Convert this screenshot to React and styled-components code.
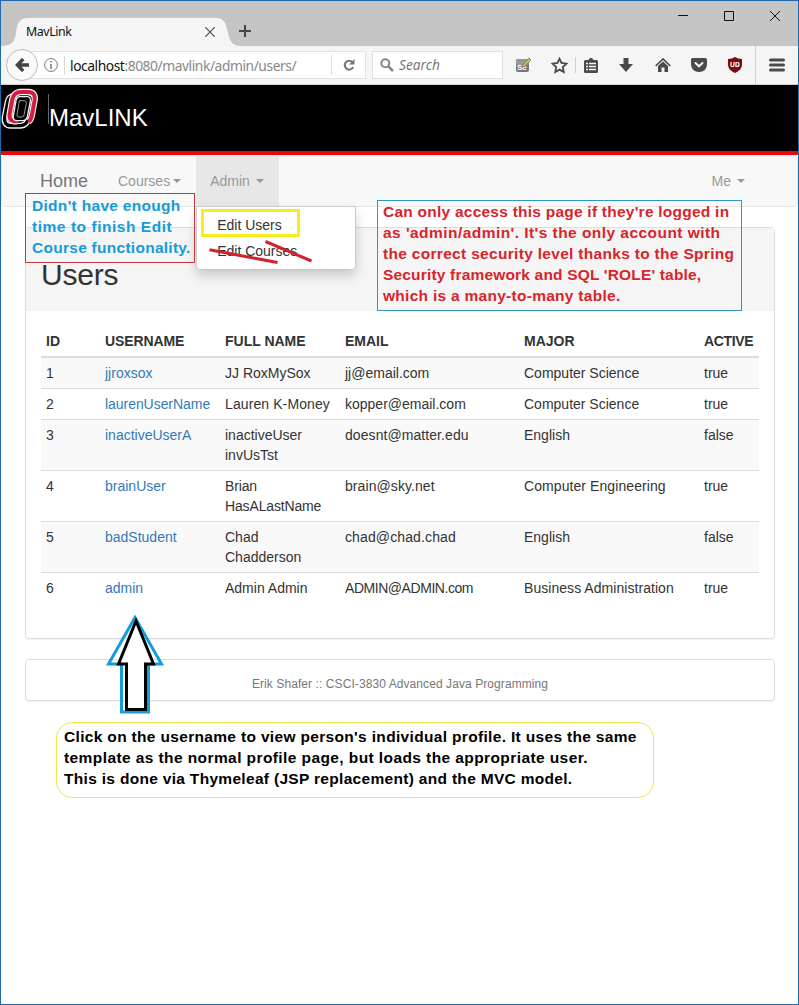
import React from 'react';
import styled, { createGlobalStyle, css } from 'styled-components';

const Global = createGlobalStyle`
  *, *::before, *::after { box-sizing: border-box; }
  body { margin: 0; background: #fff; }
  #root { font-family: "Liberation Sans", Arial, sans-serif; font-size: 14px; line-height: 20px; color: #333; }
`;

const Window = styled.div`
  position: relative;
  width: 799px;
  height: 1005px;
  border: 1px solid #1f6ba9;
  background: #fff;
  overflow: hidden;
`;

const TitleBar = styled.div`
  display: flex;
  height: 45px;
  background: #c5c5c5;
`;
const Tab = styled.div`
  position: relative;
  display: flex;
  align-items: center;
  justify-content: space-between;
  width: 237px;
  height: 28px;
  margin-top: 17px;
  padding: 0 23px 0 25px;
  font: 12.4px/16px "Noto Sans", sans-serif;
  letter-spacing: -0.45px;
  color: #111;
`;
const TabShape = styled.svg`
  position: absolute;
  left: 0;
  top: 0;
`;
const TabLabel = styled.span`
  position: relative;
`;
const Glyph = styled.svg`
  position: relative;
  display: block;
  flex: none;
`;
const NewTab = styled.div`
  padding: 24px 0 0 1px;
`;
const WindowButtons = styled.div`
  display: flex;
  gap: 34px;
  margin-left: auto;
  padding: 9px 17px 0 0;
`;

const Toolbar = styled.div`
  display: flex;
  align-items: center;
  height: 39px;
  padding-left: 5px;
  background: #f5f5f5;
  border-bottom: 1px solid #cfd1cf;
  font-family: "Noto Sans", sans-serif;
  & > * { flex: none; }
`;
const BackButton = styled.div`
  position: relative;
  z-index: 1;
  display: grid;
  place-items: center;
  width: 32px;
  height: 32px;
  border: 1px solid #bdbdbd;
  border-radius: 50%;
  background: #fafafa;
`;
const AddressBar = styled.div`
  display: flex;
  align-items: center;
  width: 343px;
  height: 28px;
  margin-left: -15px;
  padding-left: 20px;
  background: #fff;
  border: 1px solid #e3e3e3;
`;
const Url = styled.span`
  flex: 1;
  margin-left: 6px;
  padding-left: 5px;
  border-left: 1px solid #d8d8d8;
  font-size: 13.8px;
  line-height: 19px;
  letter-spacing: -0.43px;
  color: #888;
  white-space: nowrap;
  b { font-weight: 400; color: #111; }
`;
const Reload = styled.div`
  display: grid;
  place-items: center;
  width: 34px;
  height: 20px;
  border-left: 1px solid #ddd;
`;
const SearchBox = styled.div`
  display: flex;
  align-items: center;
  gap: 5px;
  width: 131px;
  height: 28px;
  margin-left: 6px;
  padding-left: 7px;
  background: #fff;
  border: 1px solid #e0e0e0;
  font-size: 13.7px;
  font-style: italic;
  color: #777;
`;
const Tools = styled.div`
  display: flex;
  align-items: center;
  height: 38px;
`;
const Tool = styled.div`
  display: grid;
  place-items: center;
  width: ${(p) => p.$w}px;
  height: ${(p) => p.$h || 38}px;
  margin-left: ${(p) => p.$ml || 0}px;
  border-left: ${(p) => (p.$line ? '1px solid #cfcfcf' : '0')};
`;

const Brand = styled.header`
  display: flex;
  height: 70px;
  background: #000;
  border-bottom: 4px solid #e60a0a;
  color: #fff;
`;
const BrandName = styled.div`
  height: 30px;
  margin: 9px 0 0 10px;
  padding-top: 10px;
  border-left: 1px solid #666;
  font-size: 24px;
  line-height: 28px;
`;

const Navbar = styled.nav`
  display: flex;
  height: 52px;
  padding-left: 38px;
  background: #f8f8f8;
  border: 1px solid #e7e7e7;
  border-radius: 4px;
  color: #999;
`;
const NavHome = styled.a`
  width: 78px;
  padding-top: 15px;
  font-size: 18px;
  color: #777;
`;
const NavItem = styled.a`
  position: relative;
  display: flex;
  align-items: center;
  gap: ${(p) => p.$gap}px;
  height: 50px;
  ${(p) => p.$active && css`
    width: 83px;
    margin-left: 15px;
    padding-left: 14px;
    background: #e7e7e7;
  `}
  ${(p) => p.$end && css`
    margin-left: auto;
    margin-right: 52px;
  `}
`;
const Caret = styled.i`
  border: 4px solid transparent;
  border-top-color: #999;
  border-bottom: 0;
`;
const Menu = styled.div`
  position: absolute;
  z-index: 2;
  left: 0;
  top: 50px;
  width: 160px;
  padding: 5px 0;
  background: #fff;
  border: 1px solid #ccc;
  border-radius: 0 0 4px 4px;
  box-shadow: 0 6px 12px rgba(0, 0, 0, 0.175);
  color: #333;
`;
const MenuItem = styled.div`
  padding: 3px 20px;
`;

const Content = styled.main`
  padding: 20px 23px 0 24px;
`;
const Panel = styled.section`
  margin-bottom: 20px;
  background: #fff;
  border: 1px solid #ddd;
  border-radius: 4px;
  box-shadow: 0 1px 1px rgba(0, 0, 0, 0.05);
`;
const PanelHeading = styled.div`
  padding: 10px 15px;
  background: #f5f5f5;
`;
const Title = styled.h2`
  margin: 20px 0 10px;
  font-size: 30px;
  font-weight: 400;
  line-height: 33px;
  letter-spacing: -0.2px;
`;
const Table = styled.table`
  display: block;
  margin: 15px 15px 34px;
  thead, tbody { display: block; }
`;
const Row = styled.tr`
  display: grid;
  grid-template-columns: 59px 120px 120px 179px 180px 60px;
  border-bottom: ${(p) => (p.$head ? '2px' : '1px')} solid #ddd;
  background: ${(p) => (p.$striped ? '#f9f9f9' : '#fff')};
  &:last-child { border-bottom-color: ${(p) => (p.$head ? '#ddd' : 'transparent')}; }
`;
const Cell = styled.td`
  min-width: 0;
  padding: 5px;
  text-align: left;
  letter-spacing: ${(p) => p.$ls || 0}px;
`;
const UserLink = styled.a`
  color: #337ab7;
`;
const FooterPanel = styled(Panel)`
  height: 42px;
  padding-top: 14px;
  font-size: 12px;
  letter-spacing: 0.08px;
  text-align: center;
  color: #777;
`;

const Note = styled.aside`
  position: absolute;
  z-index: 3;
  left: ${(p) => p.$x}px;
  top: ${(p) => p.$y}px;
  width: ${(p) => p.$w}px;
  height: ${(p) => p.$h}px;
  padding: ${(p) => p.$pad};
  border: 1px solid ${(p) => p.$border};
  border-radius: ${(p) => p.$round || 0}px;
  font-size: 15.5px;
  font-weight: 700;
  line-height: 21px;
  color: ${(p) => p.$color};
  white-space: nowrap;
`;
const NoteLine = styled.div`
  letter-spacing: ${(p) => p.$ls}px;
`;
const Ink = styled.svg`
  position: absolute;
  z-index: 4;
  left: -1px;
  top: -1px;
  pointer-events: none;
`;

const users = [
  ['1', 'jjroxsox', 'JJ RoxMySox', 'jj@email.com', 'Computer Science', 'true'],
  ['2', 'laurenUserName', 'Lauren K-Money', 'kopper@email.com', 'Computer Science', 'true'],
  ['3', 'inactiveUserA', 'inactiveUser invUsTst', 'doesnt@matter.edu', 'English', 'false'],
  ['4', 'brainUser', 'Brian HasALastName', 'brain@sky.net', 'Computer Engineering', 'true'],
  ['5', 'badStudent', 'Chad Chadderson', 'chad@chad.chad', 'English', 'false'],
  ['6', 'admin', 'Admin Admin', 'ADMIN@ADMIN.com', 'Business Administration', 'true'],
];
const headings = ['ID', 'USERNAME', 'FULL NAME', 'EMAIL', 'MAJOR', 'ACTIVE'];
const tracking = {
  'ADMIN@ADMIN.com': -0.45,
  'Brian HasALastName': -0.15,
  laurenUserName: -0.05,
  'Lauren K-Money': 0.1,
  'doesnt@matter.edu': 0.07,
  'brain@sky.net': 0.08,
  'chad@chad.chad': 0.12,
  'Computer Engineering': 0.08,
  'Business Administration': 0.05,
  USERNAME: -0.1,
  ACTIVE: -0.35,
};

const notes = [
  {
    x: 24, y: 192, w: 170, h: 70, pad: '1px 0 0 6px', border: '#c4373c', color: '#159bd7',
    lines: [["Didn't have enough", 0.3], ['time to finish Edit', 0.54], ['Course functionality.', 0.27]],
  },
  {
    x: 376, y: 199, w: 365, h: 111, pad: '0 0 0 5px', border: '#2f9ab8', color: '#d8242b',
    lines: [
      ["Can only access this page if they're logged in", 0.24],
      ["as 'admin/admin'. It's the only account with", 0.45],
      ['the correct security level thanks to the Spring', 0.31],
      ["Security framework and SQL 'ROLE' table,", 0.18],
      ['which is a many-to-many table.', 0.28],
    ],
  },
  {
    x: 55, y: 721, w: 598, h: 76, pad: '3px 0 0 7px', border: '#efe94a', color: '#000', round: 16,
    lines: [
      ["Click on the username to view person's individual profile. It uses the same", 0.33],
      ['template as the normal profile page, but loads the appropriate user.', 0.41],
      ['This is done via Thymeleaf (JSP replacement) and the MVC model.', 0.31],
    ],
  },
];

function BrowserChrome() {
  return (
    <>
      <TitleBar>
        <Tab>
          <TabShape width="240" height="28" viewBox="0 0 240 28">
            <path d="M0 28C10 28 14 24 15 15C16 5 19 0 27 0H215C223 0 225 5 227 15C229 24 232 28 240 28Z" fill="#f5f5f5" />
          </TabShape>
          <TabLabel>MavLink</TabLabel>
          <Glyph width="10" height="10" stroke="#4c4c4c" strokeWidth="1.2"><path d="M.3.3L9.7 9.7M9.7.3L.3 9.7" /></Glyph>
        </Tab>
        <NewTab>
          <Glyph width="12" height="12" stroke="#444" strokeWidth="2"><path d="M6 0V12M0 6H12" /></Glyph>
        </NewTab>
        <WindowButtons>
          <Glyph width="12" height="12" stroke="#111"><path d="M1 5.5H11" /></Glyph>
          <Glyph width="12" height="12" stroke="#111" fill="none"><path d="M1.5 1.5H10.5V10.5H1.5Z" /></Glyph>
          <Glyph width="12" height="12" stroke="#111"><path d="M1 1L11 11M11 1L1 11" /></Glyph>
        </WindowButtons>
      </TitleBar>
      <Toolbar>
        <BackButton>
          <Glyph width="14" height="14" fill="none" stroke="#444" strokeWidth="3.4"><path d="M8.200 1L2.400 7L8.200 13M2.400 7H14" /></Glyph>
        </BackButton>
        <AddressBar>
          <Glyph width="14" height="14" fill="none" stroke="#777"><circle cx="7" cy="7" r="6.4" /><path d="M7 3V4.5M7 6V11" strokeWidth="1.5" /></Glyph>
          <Url><b>localhost</b>:8080/mavlink/admin/users/</Url>
          <Reload>
            <Glyph width="12" height="12" fill="none" stroke="#777" strokeWidth="2"><path d="M9.5 3.2A4.4 4.4 0 1 0 10.2 8" /><path d="M11.5 0V5.5H6Z" fill="#777" stroke="none" /></Glyph>
          </Reload>
        </AddressBar>
        <SearchBox>
          <Glyph width="14" height="14" fill="none" stroke="#888" strokeWidth="2"><circle cx="5.3" cy="5.3" r="4" /><path d="M8.3 8.3L13 13" strokeWidth="2.6" /></Glyph>
          Search
        </SearchBox>
        <Tools>
          <Tool $w={40}>
            <Glyph width="16" height="16">
              <rect x="1" y="2" width="13" height="13" rx="2" fill="#777" />
              <rect x="1" y="2" width="13" height="6" rx="2" fill="#999" />
              <text x="2" y="13" fontSize="8" fontWeight="700" fill="#fff" fontFamily="Liberation Sans">Se</text>
              <path d="M7 9L14 1L16 3L9 10Z" fill="#d4c24c" stroke="#5e5833" strokeWidth=".6" />
            </Glyph>
          </Tool>
          <Tool $w={32}>
            <Glyph width="17" height="17" fill="none" stroke="#4a4a4a" strokeWidth="1.8"><path d="M8.5 1.8L10.5 6L15.4 6.7L11.8 10L12.7 15L8.5 12.6L4.3 15L5.2 10L1.6 6.7L6.5 6Z" /></Glyph>
          </Tool>
          <Tool $line $w={30} $h={16}>
            <Glyph width="14" height="15">
              <path d="M1.5 2H4.5L6 0H8L9.500 2H12.500Q14 2 14 3.500V13.500Q14 15 12.500 15H1.500Q0 15 0 13.500V3.500Q0 2 1.500 2Z" fill="#4a4a4a" />
              <path d="M2 5.500H4M5 5.500H12M2 8.500H4M5 8.500H12M2 11.500H4M5 11.500H12" stroke="#f5f5f5" strokeWidth="1.600" />
            </Glyph>
          </Tool>
          <Tool $w={42}>
            <Glyph width="14" height="14" fill="#4a4a4a"><path d="M4.500 0H9.500V6H14L7 14L0 6H4.500Z" /></Glyph>
          </Tool>
          <Tool $w={31}>
            <Glyph width="16" height="14"><path d="M.7 8L8 1L15.300 8" fill="none" stroke="#4a4a4a" strokeWidth="1.700" /><path d="M3 8L8 3.500L13 8V14H9.500V9.500H6.500V14H3Z" fill="#4a4a4a" /></Glyph>
          </Tool>
          <Tool $w={41}>
            <Glyph width="16" height="14"><path d="M1.500 0H14.500Q16 0 16 1.500V6C16 11 12.500 14 8 14S0 11 0 6V1.500Q0 0 1.500 0Z" fill="#4a4a4a" /><path d="M4.500 5L8 8.300L11.500 5" fill="none" stroke="#f5f5f5" strokeWidth="2" strokeLinecap="round" /></Glyph>
          </Tool>
          <Tool $w={31}>
            <Glyph width="14" height="16"><path d="M7 0Q10 2 14 2V7C14 12 11 14 7 16C3 14 0 12 0 7V2Q4 2 7 0Z" fill="#800b0e" /><path d="M3 5V8.500Q3 9.500 4 9.500H5Q6 9.500 6 8.500V5M8 5.500V9.500H9Q11 9.500 11 7.500T9 5.500Z" fill="none" stroke="#fff" strokeWidth="1.200" /></Glyph>
          </Tool>
          <Tool $line $w={43} $ml={5}>
            <Glyph width="16" height="14" stroke="#4a4a4a" strokeWidth="3" strokeLinecap="round"><path d="M1.500 2H14.500M1.500 7H14.500M1.500 12H14.500" /></Glyph>
          </Tool>
        </Tools>
      </Toolbar>
    </>
  );
}

function Logo() {
  const back = 'M40 36Q26 38 23 54L14 100Q11 124 32 125H62Q80 124 85 104L94 60Q96 40 80 36Z';
  const front = 'M52 112H42Q26 108 29 90L37 46Q41 26 60 24H86Q107 25 104 48L96 92Q93 108 86 113';
  return (
    <Glyph width="37" height="46" viewBox="3 3 111 138" fill="none">
      <path d={back} stroke="#f2f2f2" strokeWidth="18" />
      <path d={back} stroke="#000" strokeWidth="10" />
      <path d={front} stroke="#f2f2f2" strokeWidth="19" />
      <path d={front} stroke="#d51d3d" strokeWidth="12" />
      <path d="M58 38H82Q93 39 91 52L82 98Q79 110 68 110H50Q38 109 40 96L48 50Q50 39 58 38Z" fill="#000" stroke="#f2f2f2" strokeWidth="4" />
      <path d="M58 50H74Q80 51 79 58L72 93Q71 99 65 99H55Q50 98 51 92L57 57Q57 50 62 50" stroke="#bbb" strokeWidth="2.500" />
    </Glyph>
  );
}

export default function App() {
  return (
    <Window>
      <Global />
      <BrowserChrome />
      <Brand>
        <Logo />
        <BrandName>MavLINK</BrandName>
      </Brand>
      <Navbar>
        <NavHome>Home</NavHome>
        <NavItem $gap={3}>Courses<Caret /></NavItem>
        <NavItem $gap={6} $active>
          Admin<Caret />
          <Menu>
            <MenuItem>Edit Users</MenuItem>
            <MenuItem>Edit Courses</MenuItem>
          </Menu>
        </NavItem>
        <NavItem $gap={6} $end>Me<Caret /></NavItem>
      </Navbar>
      <Content>
        <Panel>
          <PanelHeading><Title>Users</Title></PanelHeading>
          <Table>
            <thead>
              <Row $head>{headings.map((h) => <Cell as="th" key={h} $ls={tracking[h]}>{h}</Cell>)}</Row>
            </thead>
            <tbody>
              {users.map((user, i) => (
                <Row key={user[0]} $striped={i % 2 === 0}>
                  {user.map((value, c) => (
                    <Cell key={c} $ls={tracking[value]}>{c === 1 ? <UserLink>{value}</UserLink> : value}</Cell>
                  ))}
                </Row>
              ))}
            </tbody>
          </Table>
        </Panel>
        <FooterPanel as="footer">Erik Shafer :: CSCI-3830 Advanced Java Programming</FooterPanel>
      </Content>
      {notes.map((n) => (
        <Note key={n.y} $x={n.x} $y={n.y} $w={n.w} $h={n.h} $pad={n.pad} $border={n.border} $color={n.color} $round={n.round}>
          {n.lines.map(([text, ls]) => <NoteLine key={text} $ls={ls}>{text}</NoteLine>)}
        </Note>
      ))}
      <Ink width="799" height="1005" fill="none">
        <rect x="202.500" y="210.500" width="96" height="25" stroke="#f9ec1f" strokeWidth="3" />
        <path d="M209.500 249.800L277.500 262.500M265.500 241.500L311.500 261" stroke="#d0232a" strokeWidth="3" />
        <path d="M135 617.500L108.500 664H121.500V712H148.500V664H161.500Z" stroke="#149dda" strokeWidth="3" />
        <path d="M136 621L118.500 664H126.500V709.500H145.500V664H153.500Z" stroke="#000" strokeWidth="3" fill="#fff" />
      </Ink>
    </Window>
  );
}
